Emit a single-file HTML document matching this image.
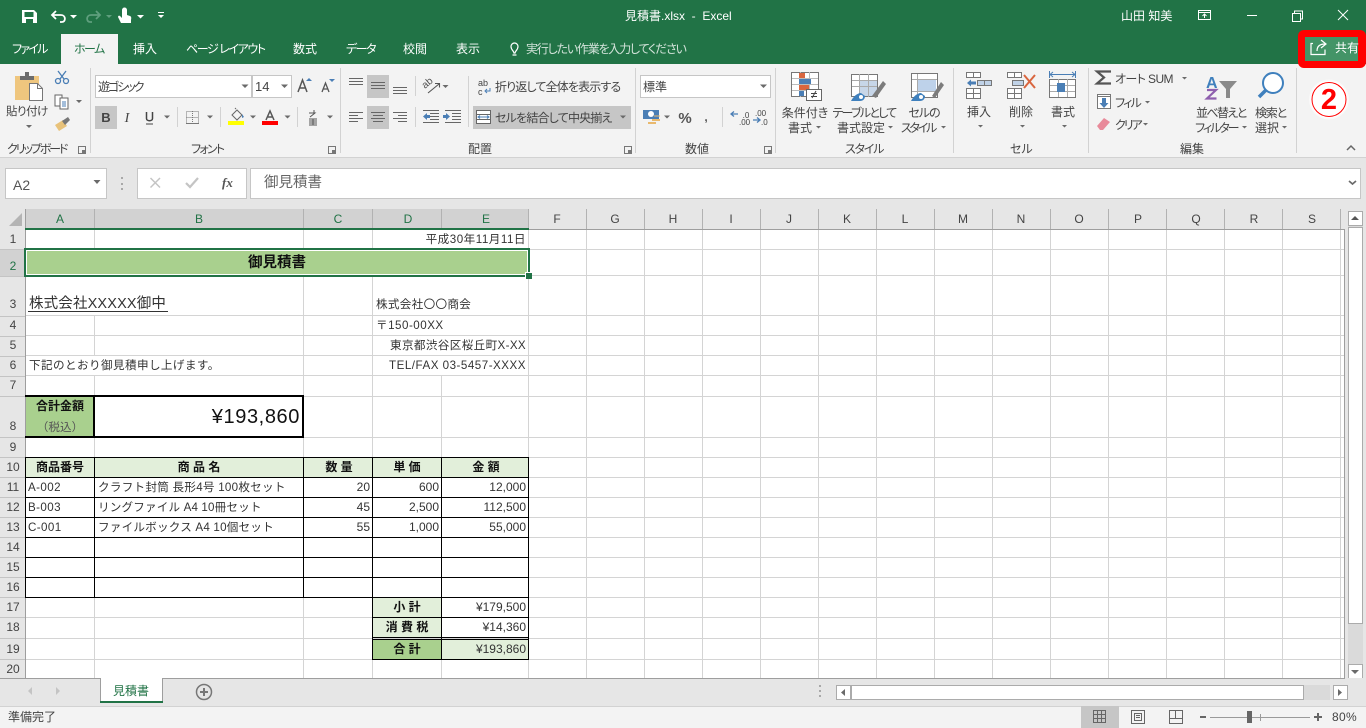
<!DOCTYPE html>
<html lang="ja"><head><meta charset="utf-8"><title>見積書.xlsx - Excel</title>
<style>
html,body{margin:0;padding:0;width:1366px;height:728px;overflow:hidden;background:#fff}
body{position:relative;font-family:"Liberation Sans","Noto Sans CJK JP",sans-serif;font-size:12px;color:#444}
.b{position:absolute}
.t{position:absolute;white-space:nowrap;line-height:16px;height:16px}
.c{transform:translateX(-50%)}
.w{color:#fff;font-feature-settings:"palt"}
.k{color:#222}
.h{color:#444;font-size:12px;font-feature-settings:"palt"}
.g{color:#217346}
.p{font-feature-settings:"palt"}
.x{font-size:11.6px;color:#333;margin-top:1px}
.n{font-size:12px;color:#333;text-align:right}
.bd{font-weight:700;color:#111;font-size:12px}
svg{position:absolute;left:0;top:0}
</style></head><body>
<div class="b" style="left:0;top:0;width:1366px;height:64px;background:#217346"></div>
<div class="b" style="left:0;top:64px;width:1366px;height:93px;background:#f3f3f3"></div>
<div class="b" style="left:0;top:157px;width:1366px;height:1px;background:#d2d2d2"></div>
<div class="b" style="left:0;top:158px;width:1366px;height:520px;background:#e6e6e6"></div>
<div class="b" style="left:61px;top:34px;width:57px;height:31px;background:#f3f3f3"></div>

<div class="b" style="left:1298px;top:30px;width:68px;height:38px;background:#f00;border-radius:6px"></div>
<div class="b" style="left:1305px;top:37px;width:53px;height:24px;background:#439467"></div>

<div class="b" style="left:95px;top:75px;width:155px;height:21px;background:#fff;border:1px solid #c6c6c6"></div>
<div class="b" style="left:252px;top:75px;width:38px;height:21px;background:#fff;border:1px solid #c6c6c6"></div>
<div class="b" style="left:640px;top:75px;width:129px;height:21px;background:#fff;border:1px solid #c6c6c6"></div>
<div class="b" style="left:95px;top:106px;width:22px;height:23px;background:#c6c6c6"></div>
<div class="b" style="left:367px;top:75px;width:22px;height:23px;background:#c6c6c6"></div>
<div class="b" style="left:367px;top:106px;width:22px;height:23px;background:#c6c6c6"></div>
<div class="b" style="left:473px;top:106px;width:158px;height:23px;background:#c6c6c6"></div>

<div class="b" style="left:5px;top:168px;width:100px;height:29px;background:#fff;border:1px solid #c6c6c6"></div>
<div class="b" style="left:137px;top:168px;width:108px;height:29px;background:#fff;border:1px solid #c6c6c6"></div>
<div class="b" style="left:250px;top:168px;width:1109px;height:29px;background:#fff;border:1px solid #c6c6c6"></div>

<div class="b" style="left:25px;top:230px;width:1319px;height:448px;background:#fff"></div>
<div class="b" style="left:25px;top:209px;width:504px;height:20px;background:#d2d2d2"></div>
<div class="b" style="left:0;top:249px;width:25px;height:27px;background:#d2d2d2"></div>

<div class="b" style="left:26px;top:250px;width:502px;height:25px;background:#a9d08e"></div>
<div class="b" style="left:26px;top:397px;width:68px;height:40px;background:#a9d08e"></div>
<div class="b" style="left:26px;top:458px;width:502px;height:19px;background:#e2efda"></div>
<div class="b" style="left:373px;top:598px;width:68px;height:39px;background:#e2efda"></div>
<div class="b" style="left:373px;top:640px;width:68px;height:19px;background:#a9d08e"></div>
<div class="b" style="left:442px;top:640px;width:86px;height:19px;background:#e2efda"></div>

<div class="b" style="left:1348px;top:211px;width:15px;height:467px;background:#dadada"></div>
<div class="b" style="left:1348px;top:227px;width:13px;height:395px;background:#fff;border:1px solid #ababab"></div>
<div class="b" style="left:1348px;top:211px;width:13px;height:13px;background:#fff;border:1px solid #ababab"></div>
<div class="b" style="left:1348px;top:664px;width:13px;height:13px;background:#fff;border:1px solid #ababab"></div>

<div class="b" style="left:0;top:678px;width:1366px;height:28px;background:#e6e6e6"></div>
<div class="b" style="left:0;top:678px;width:1345px;height:1px;background:#9e9e9e"></div>
<div class="b" style="left:100px;top:678px;width:61px;height:23px;background:#fff;border-left:1px solid #9e9e9e;border-right:1px solid #9e9e9e"></div>
<div class="b" style="left:100px;top:701px;width:63px;height:2px;background:#217346"></div>
<div class="b" style="left:851px;top:685px;width:479px;height:15px;background:#dadada"></div>
<div class="b" style="left:851px;top:685px;width:451px;height:13px;background:#fff;border:1px solid #ababab"></div>
<div class="b" style="left:836px;top:685px;width:13px;height:13px;background:#fff;border:1px solid #ababab"></div>
<div class="b" style="left:1333px;top:685px;width:13px;height:13px;background:#fff;border:1px solid #ababab"></div>
<div class="b" style="left:0;top:706px;width:1366px;height:22px;background:#f3f3f3;border-top:1px solid #d2d2d2;box-sizing:border-box"></div>
<div class="b" style="left:1081px;top:706px;width:38px;height:22px;background:#c6c6c6"></div>

<svg width="1366" height="728" viewBox="0 0 1366 728">
<!-- grid -->
<path fill="none" stroke="#d4d4d4" d="M25 249.500H1344M25 275.500H1344M25 315.500H1344M25 335.500H1344M25 355.500H1344M25 375.500H1344M25 396.500H1344M25 437.500H1344M25 457.500H1344M25 477.500H1344M25 497.500H1344M25 517.500H1344M25 537.500H1344M25 557.500H1344M25 577.500H1344M25 597.500H1344M25 617.500H1344M25 638.500H1344M25 659.500H1344"/>
<path fill="none" stroke="#d4d4d4" d="M94.500 230V249M94.500 316V356M94.500 376V396M94.500 437V678M303.500 230V249M303.500 276V678M372.500 230V249M372.500 276V678M441.500 376V678M528.500 230V678M586.500 230V678M644.500 230V678M702.500 230V678M760.500 230V678M818.500 230V678M876.500 230V678M934.500 230V678M992.500 230V678M1050.500 230V678M1108.500 230V678M1166.500 230V678M1224.500 230V678M1282.500 230V678M1340.500 230V678"/>
<path fill="none" stroke="#9e9e9e" d="M1344.500 229V679M25 229.500H1345M25.500 209V678"/>
<!-- row header separators -->
<path fill="none" stroke="#c4c4c4" d="M0 249.500H25M0 276.500H25M0 316.500H25M0 336.500H25M0 356.500H25M0 376.500H25M0 396.500H25M0 437.500H25M0 457.500H25M0 477.500H25M0 497.500H25M0 517.500H25M0 537.500H25M0 557.500H25M0 577.500H25M0 597.500H25M0 617.500H25M0 638.500H25M0 659.500H25"/>
<path fill="none" stroke="#b2b2b2" d="M94.500 209V229M303.500 209V229M372.500 209V229M441.500 209V229M528.500 209V229M586.500 209V229M644.500 209V229M702.500 209V229M760.500 209V229M818.500 209V229M876.500 209V229M934.500 209V229M992.500 209V229M1050.500 209V229M1108.500 209V229M1166.500 209V229M1224.500 209V229M1282.500 209V229M1340.500 209V229"/>
<path fill="#b4b4b4" d="M22 213V226H9z"/>
<!-- sheet borders -->
<path fill="none" stroke="#000" d="M25 457.500H529M25 477.500H529M25 497.500H529M25 517.500H529M25 537.500H529M25 557.500H529M25 577.500H529M25 597.500H529M25.500 457V598M94.500 457V598M303.500 457V598M372.500 457V660M441.500 457V660M528.500 457V660M372 617.500H529M372 637.500H529M372 639.500H529M372 659.500H529"/>
<path fill="none" stroke="#000" stroke-width="2" d="M25 396H303V437H25M94 396V437"/>
<path fill="none" stroke="#333" d="M28 311.500H168"/>
<!-- selection -->
<path fill="none" stroke="#fff" d="M26.500 250.500H527.500V274.500H26.500z"/>
<rect x="25" y="249" width="504" height="27" fill="none" stroke="#217346" stroke-width="2"/>
<rect x="25" y="228" width="504" height="2" fill="#217346"/>
<rect x="525" y="272" width="7" height="7" fill="#fff"/><rect x="526" y="273" width="6" height="6" fill="#217346"/>

<!-- QAT -->
<path fill="#fff" d="M22 10h12l3 3v10H22zM24.500 12v5h9v-5zM26 19v4h7v-4z"/><path fill="#217346" d="M29 20h2v2h-2z"/>
<path fill="none" stroke="#fff" stroke-width="1.800" d="M53 15h8c5 0 5 7 1 7h-2M56 11l-4 4 4 4"/>
<path fill="none" stroke="#5f9f7e" stroke-width="1.800" d="M99 15h-8c-5 0-5 7-1 7h2M96 11l4 4-4 4"/>
<path fill="#fff" d="M122 10a2.500 2.500 0 0 1 5 0v5l3 1c2 1 1 3 1 4v3h-10l-3-6c0-1 1-2 2-1l2 2z"/>
<path fill="#fff" d="M70 15h7l-3.500 3.500zM137 15h7l-3.500 3.500zM158 15h6l-3 3zM158 12h6v1h-6z"/><path fill="#5f9f7e" d="M106 15h6l-3 3z"/>
<!-- Title buttons -->
<path fill="none" stroke="#fff" d="M1198.500 10.500h12v9h-12zM1198 12.500h13M1204.500 18v-4M1202.500 16l2-2 2 2"/>
<path fill="none" stroke="#fff" d="M1247 15.500h10M1292.500 13.500h8v8h-8zM1294.500 13.500v-2.500h8v8h-2M1338 10l10 10M1348 10l-10 10"/>
<path fill="none" stroke="#fff" stroke-width="1.200" d="M514 53c0-2-3-3-3-6.500a3.500 3.500 0 0 1 7 0c0 3.500-3 4.500-3 6.500zM512.500 55h4"/>
<path fill="none" stroke="#fff" stroke-width="1.200" d="M1313 43.500h-2v11h14v-5M1317 51c0-4 2-7 8-7M1321 40l5 4-5 4"/>

<!-- small arrows -->
<path fill="#6a6a6a" d="M241.500 84.500h7l-3.500 3.500zM281 84.500h7l-3.500 3.500zM164 115.500h6l-3 3zM207 115.500h6l-3 3zM250 115.500h6l-3 3zM284.500 115.500h6l-3 3zM327 115.500h6l-3 3zM442.500 85h6l-3 3zM26 125h6l-3 3zM76 100h6l-3 3zM620 115.500h6l-3 3zM760 84.500h7l-3.500 3.500zM664 115.500h6l-3 3zM816 126h5l-2.500 2.500zM888 126h5l-2.500 2.500zM941 126h5l-2.500 2.500zM978 125h5l-2.500 2.500zM1020 125h5l-2.500 2.500zM1062 125h5l-2.500 2.500zM1182 77h5l-2.500 2.500zM1145 101h5l-2.500 2.500zM1143 123h5l-2.500 2.500zM1242 126h5l-2.500 2.500zM1282 126h5l-2.500 2.500zM93.500 180h7l-3.500 4z"/>
<!-- group separators -->
<path fill="none" stroke="#d2d2d2" d="M90.500 68V153M340.500 68V153M635.500 68V153M775.500 68V153M953.500 68V153M1088.500 68V153M1296.500 68V153M177.500 107V127M220.500 107V127M297.500 107V127M415.500 76V96M415.500 107V127M468.500 76V127M722.500 107V127"/>
<!-- launchers -->
<path fill="none" stroke="#777" d="M78.500 146.500h7v7h-7zM328.500 146.500h7v7h-7zM624.500 146.500h7v7h-7zM764.500 146.500h7v7h-7z"/>
<path fill="#777" d="M82 150h3v3h-3zM332 150h3v3h-3zM628 150h3v3h-3zM768 150h3v3h-3z"/>

<!-- paste -->
<path fill="#efc67e" d="M15 76h24v24H15z"/><path fill="#6b6b6b" d="M20 76h14v4H20zM25 72h4v4h-4z"/>
<path fill="#fff" stroke="#777" d="M29.500 83.500h8l5 5v12h-13z"/><path fill="none" stroke="#777" d="M37.500 83.500v5h5"/>
<path fill="none" stroke="#4a7eb5" stroke-width="1.300" d="M58 71l6 8M66 71l-6 8"/><circle cx="58" cy="81" r="2.500" fill="none" stroke="#4a7eb5" stroke-width="1.300"/><circle cx="66" cy="81" r="2.500" fill="none" stroke="#4a7eb5" stroke-width="1.300"/>
<path fill="#fff" stroke="#666" d="M55 95h7v11h-7z"/><path fill="#fff" stroke="#666" d="M60 98h8v11h-8z"/><path stroke="#4a7eb5" d="M62 102h4M62 104h4M62 106h4"/>
<path fill="#e8c27a" d="M55 125l8-5 4 6-8 5z"/><path fill="#777" d="M62 121l6-4 2 3-5 5z"/>
<!-- font grow -->
<path fill="none" stroke="#555" stroke-width="1.500" d="M298 92l4.500-12 4.500 12M300 88h5"/><path fill="#4a7eb5" d="M306 81l3-3 3 3z"/>
<path fill="none" stroke="#555" stroke-width="1.300" d="M322 92l3.500-9 3.500 9M323.500 89h4"/><path fill="#4a7eb5" d="M329 79l3 3 3-3z"/>
<text x="106" y="122" text-anchor="middle" font-family="Liberation Sans" font-weight="700" font-size="13" fill="#444">B</text>
<text x="127" y="122" text-anchor="middle" font-family="Liberation Serif" font-style="italic" font-size="14" fill="#444">I</text>
<path fill="none" stroke="#444" stroke-width="1.500" d="M146.500 112v6.500c0 3 6 3 6 0V112"/><path stroke="#444" d="M146 124h7"/>
<path fill="none" stroke="#777" stroke-dasharray="1 1" d="M186.500 111.500h12v12h-12zM186.500 117.500h12M192.500 111v13"/><path stroke="#777" d="M186 123.500h13"/>
<path fill="none" stroke="#666" d="M232 115l5-5 5 5-5 5zM236 109l-1-1"/><path fill="#4a7eb5" d="M242 114l2 3-2 1z"/><rect x="228" y="121" width="16" height="4" fill="#ff0"/>
<path fill="none" stroke="#555" stroke-width="1.500" d="M266 120l4-9 4 9M268 117h5"/><rect x="262" y="121" width="16" height="4" fill="#f00"/>
<path fill="none" stroke="#555" d="M309 113h6l-5 4M309 119h8M313 119v6M309 121h8M309 123h8M309 125h8"/><path stroke="#555" d="M314 110v3"/>
<!-- alignment -->
<path fill="none" stroke="#666" d="M349 78.500h14M349 81.500h14M349 84.500h14M371 82.500h14M371 85.500h14M371 88.500h14M393 87.500h14M393 90.500h14M393 93.500h14M349 112.500h14M349 115.500h9M349 118.500h14M349 121.500h9M371 112.500h14M373 115.500h10M371 118.500h14M373 121.500h10M393 112.500h14M398 115.500h9M393 118.500h14M398 121.500h9"/>
<text transform="translate(425 89) rotate(-40)" font-family="Liberation Sans" font-size="10" fill="#555">ab</text>
<path fill="none" stroke="#555" stroke-width="1.100" d="M428 93l11-9M435 83.500h4.500v4"/>
<path fill="none" stroke="#666" d="M423 110.500h16M430 113.500h9M430 116.500h9M430 119.500h9M423 122.500h16M445 110.500h16M452 113.500h9M452 116.500h9M452 119.500h9M445 122.500h16"/>
<path fill="#4a7eb5" d="M423 116.500l4-3.500v2h3v3h-3v2zM450 116.500l-4-3.500v2h-3v3h3v2z"/>
<!-- wrap -->
<text x="478" y="86" font-family="Liberation Sans" font-size="9" fill="#444">ab</text><text x="478" y="95" font-family="Liberation Sans" font-size="9" fill="#444">c</text>
<path fill="none" stroke="#4a7eb5" d="M490 88v3h-4M487 89l-2 2 2 2"/>
<path fill="#fff" stroke="#666" d="M476.500 110.500h14v13h-14z"/><path stroke="#666" d="M477 114.500h13M477 119.500h13"/><path fill="none" stroke="#4a7eb5" d="M479 117h9M480 115.500l-2 1.500 2 1.500M487 115.500l2 1.500-2 1.500"/>
<!-- number -->
<path fill="#4a7eb5" d="M643 110h16v9h-16z"/><circle cx="651" cy="114" r="3" fill="#fff"/><path fill="#e9b96e" d="M652 119h8v2h-8zM648 122h8v2h-8z"/><path fill="none" stroke="#e9b96e" d="M654 116h6"/>
<text x="685" y="123" text-anchor="middle" font-family="Liberation Sans" font-weight="700" font-size="15" fill="#555">%</text>
<text x="706" y="121" text-anchor="middle" font-family="Liberation Sans" font-weight="700" font-size="12" fill="#555">,</text>
<path fill="none" stroke="#4a7eb5" stroke-width="1.300" d="M731 114h7M734 111.500l-3 2.500 3 2.500M753 120h7M757 117.500l3 2.500-3 2.500"/>
<text x="746" y="118" text-anchor="middle" font-family="Liberation Sans" font-size="8" fill="#444">.0</text><text x="739" y="125" font-family="Liberation Sans" font-size="8" fill="#444">.00</text>
<text x="755" y="116" font-family="Liberation Sans" font-size="8" fill="#444">.00</text><text x="761" y="125" font-family="Liberation Sans" font-size="8" fill="#444">.0</text>
<!-- cond format -->
<path fill="#fff" stroke="#777" d="M791.500 72.500h27v24h-27z"/><path stroke="#bbb" fill="none" d="M800.500 72v25M809.500 72v25M792 78.500h26M792 84.500h26M792 90.500h26"/>
<path fill="#d9663f" d="M799 73h6v5h-6zM799 85h10v5h-10z"/><path fill="#4a7eb5" d="M799 79h12v5h-12zM799 91h5v5h-5z"/>
<path fill="#fff" stroke="#666" d="M806.500 89.500h15v11h-15z"/><path fill="none" stroke="#444" d="M811 93.500h6M811 96.500h6M816 91l-4 7"/>
<!-- table format -->
<path fill="#fff" stroke="#777" d="M851.500 74.500h26v22h-26z"/><path fill="#c7d6e8" d="M859 80h18v16h-18z"/><path fill="none" stroke="#aaa" d="M859.500 74v23M868.500 74v23M852 80.500h25M852 86.500h25"/>
<path fill="#7c7c7c" d="M872 96l11-15 3 3-10 14z"/><path fill="#3f80bd" d="M851 101c2-4 6-8 10-8l4 3c0 3-2 5-5 5z"/><path fill="#fff" d="M859 97a2 2 0 1 0 4 0a2 2 0 1 0-4 0"/>
<!-- cell style -->
<path fill="#fff" stroke="#777" d="M911.500 73.500h26v24h-26z"/><path fill="#bed2ea" d="M917 79h19v12h-19z"/><path fill="none" stroke="#aaa" d="M917.500 74v23M912 79.500h25M912 91.500h25"/>
<path fill="#7c7c7c" d="M932 96l9-14 3 3-9 13z"/><path fill="#3f80bd" d="M911 101c2-4 6-8 10-8l4 3c0 3-2 5-5 5z"/><path fill="#fff" d="M919 97a2 2 0 1 0 4 0a2 2 0 1 0-4 0"/>
<!-- insert -->
<path fill="#fff" stroke="#777" d="M966.500 72.500h14v5h-14zM973.500 72.500v5M966.500 88.500h14v10h-14zM973.500 88.500v10M966.500 93.500h14"/>
<path fill="#c0d2e7" stroke="#777" d="M977.500 80.500h14v5h-14zM984.500 80.500v5"/><path fill="#4a7eb5" d="M967 83l4-3.500v2h5v3h-5v2z"/>
<!-- delete -->
<path fill="#fff" stroke="#777" d="M1007.500 72.500h14v5h-14zM1014.500 72.500v5M1007.500 88.500h14v10h-14zM1014.500 88.500v10M1007.500 93.500h14"/>
<path fill="#c0d2e7" stroke="#777" d="M1012.500 80.500h11v5h-11z"/><path fill="none" stroke="#d9663f" stroke-width="2" d="M1024 75l11 13M1035 75l-11 13"/>
<!-- format -->
<path fill="#fff" stroke="#777" d="M1049.500 79.500h26v18h-26z"/><path fill="none" stroke="#aaa" d="M1058.500 79v18M1067.500 79v18M1050 85.500h25M1050 91.500h25"/><path fill="#4a7eb5" d="M1057 83h8v9h-8z"/>
<path fill="none" stroke="#4a7eb5" d="M1050 74.500h25M1053 72l-3 2.500 3 2.500M1072 72l3 2.500-3 2.500"/><path stroke="#4a7eb5" d="M1049.500 71v7M1075.500 71v7"/>
<!-- sum etc -->
<path fill="none" stroke="#555" stroke-width="2.200" d="M1111 71.500h-14l7 6-7 6h14"/>
<path fill="#fff" stroke="#777" d="M1097.500 94.500h13v14h-13z"/><path fill="#4a7eb5" d="M1102 98h4v5h2.500l-4.500 5-4.500-5h2.500z"/><path stroke="#777" d="M1098 96.500h12"/>
<path fill="#e88a9a" d="M1097 126l7-8 6 4-7 8h-3z"/>
<!-- sort -->
<text x="1206" y="88" font-family="Liberation Sans" font-weight="700" font-size="16" fill="#3f80bd">A</text>
<path fill="none" stroke="#8e5fae" stroke-width="2.200" d="M1207 90h9l-9 8.500h9.500"/>
<path fill="#8a8a8a" d="M1219 81h18l-7 8v9h-4v-9z"/>
<!-- find -->
<circle cx="1273" cy="83" r="10" fill="#fff" stroke="#3f80bd" stroke-width="2"/><path stroke="#3f80bd" stroke-width="3.500" d="M1266 90l-7 7"/>
<!-- formula -->
<path fill="none" stroke="#c4c4c4" stroke-width="1.500" d="M150.500 178l9.500 9.500M160 178l-9.500 9.500"/>
<path fill="none" stroke="#c4c4c4" stroke-width="2.200" d="M186 183l4 4 8-9"/>
<text x="222" y="187" font-family="Liberation Serif" font-style="italic" font-weight="700" font-size="13" fill="#555">fx</text>
<path fill="#a8a8a8" d="M121 177h2v2h-2zM121 183h2v2h-2zM121 188h2v2h-2z"/>
<path fill="#555" d="M1351 220l4-4 4 4z"/>
<path fill="#6a6a6a" d="M1351 670h8l-4 4z"/>
<path fill="none" stroke="#6a6a6a" stroke-width="1.700" d="M1349 181l3.500 3 3.500-3"/>
<!-- ribbon collapse -->
<path fill="none" stroke="#666" stroke-width="1.500" d="M1347 150l4-4 4 4"/>
<!-- sheet tab nav -->
<path fill="#c4c4c4" d="M32 687v8l-4-4zM56 687v8l4-4z"/>
<circle cx="204" cy="692" r="7.500" fill="none" stroke="#777" stroke-width="1.500"/><path stroke="#777" stroke-width="2" d="M200 692h8M204 688v8"/>
<path fill="#a8a8a8" d="M819 690h2v2h-2zM819 695h2v2h-2zM819 685h2v2h-2z"/>
<path fill="#6a6a6a" d="M845 689v7l-4-3.500zM1338 689v7l4-3.500z"/>
<!-- status -->
<path fill="none" stroke="#666" d="M1093.500 710.500h12v12h-12zM1097.500 710v13M1101.500 710v13M1093 714.500h13M1093 718.500h13"/>
<path fill="none" stroke="#666" d="M1131.500 710.500h13v13h-13zM1134.500 713.500h7v7h-7zM1136 715.500h4M1136 717.500h4"/>
<path fill="none" stroke="#666" d="M1169.500 710.500h13v13h-13zM1175.500 710v8.500h-6M1175.500 718.500h7"/>
<path fill="#666" d="M1200 716h6v2h-6zM1314 716h8v2h-8zM1317 713h2v8h-2z"/>
<path stroke="#9a9a9a" d="M1210 717.500h100M1260.500 714v7"/>
<rect x="1247" y="711" width="5" height="12" fill="#666"/>
<!-- circled 2 -->
<circle cx="1329" cy="99.500" r="20" fill="#fff" opacity=".55"/>
<circle cx="1329" cy="99.500" r="18.500" fill="#fff"/>
<circle cx="1329" cy="99.500" r="17" fill="#fff" stroke="#f00"/>
</svg>
<div class="t" style="left:1314px;top:85px;width:30px;text-align:center;font-size:29px;line-height:30px;height:30px;font-weight:700;color:#f00">2</div>

<!-- Title -->
<div class="t w" style="left:625px;top:8px;font-size:12px">見積書.xlsx&nbsp;&nbsp;-&nbsp;&nbsp;Excel</div>
<div class="t w" style="left:1121px;top:8px;font-size:12px">山田 知美</div>
<!-- Tabs -->
<div class="t w" style="left:12px;top:41px;letter-spacing:-1.7px">ファイル</div>
<div class="t g p" style="left:74px;top:41px;letter-spacing:-1.5px">ホーム</div>
<div class="t w" style="left:133px;top:41px">挿入</div>
<div class="t w" style="left:186px;top:41px;letter-spacing:-1.4px">ページ レイアウト</div>
<div class="t w" style="left:293px;top:41px">数式</div>
<div class="t w" style="left:346px;top:41px;letter-spacing:-1.5px">データ</div>
<div class="t w" style="left:403px;top:41px">校閲</div>
<div class="t w" style="left:456px;top:41px">表示</div>
<div class="t p" style="left:526px;top:41px;color:#d3e3da;letter-spacing:-1.2px">実行したい作業を入力してください</div>
<div class="t w" style="left:1335px;top:40px">共有</div>
<!-- Ribbon text -->
<div class="t h" style="left:6px;top:104px;font-size:11.500px;letter-spacing:-.5px">貼り付け</div>
<div class="t h" style="left:98px;top:79px;letter-spacing:-2px">遊ゴシック</div>
<div class="t h" style="left:255px;top:79px;font-size:13px">14</div>
<div class="t h" style="left:643px;top:79px">標準</div>
<div class="t h" style="left:495px;top:79px;letter-spacing:-.85px">折り返して全体を表示する</div>
<div class="t h" style="left:495px;top:110px;letter-spacing:-.8px">セルを結合して中央揃え</div>
<div class="t h c" style="left:805px;top:105px">条件付き</div>
<div class="t h c" style="left:800px;top:120px">書式</div>
<div class="t h c" style="left:864px;top:105px;letter-spacing:-1.7px">テーブルとして</div>
<div class="t h c" style="left:861px;top:120px">書式設定</div>
<div class="t h c" style="left:924px;top:105px;letter-spacing:-1px">セルの</div>
<div class="t h c" style="left:918px;top:120px;letter-spacing:-2.2px">スタイル</div>
<div class="t h" style="left:967px;top:104px">挿入</div>
<div class="t h" style="left:1009px;top:104px">削除</div>
<div class="t h" style="left:1051px;top:104px">書式</div>
<div class="t h" style="left:1115px;top:71px;letter-spacing:-.6px">オート SUM</div>
<div class="t h" style="left:1115px;top:95px;letter-spacing:-1.7px">フィル</div>
<div class="t h" style="left:1115px;top:117px;letter-spacing:-2px">クリア</div>
<div class="t h" style="left:1196px;top:105px;letter-spacing:-1.6px">並べ替えと</div>
<div class="t h" style="left:1195px;top:120px;letter-spacing:-2px">フィルター</div>
<div class="t h" style="left:1255px;top:105px;letter-spacing:-1.2px">検索と</div>
<div class="t h" style="left:1255px;top:120px">選択</div>
<div class="t h" style="left:7px;top:141px;letter-spacing:-2.1px">クリップボード</div>
<div class="t h" style="left:191px;top:141px;letter-spacing:-1.75px">フォント</div>
<div class="t h" style="left:468px;top:141px">配置</div>
<div class="t h" style="left:685px;top:141px">数値</div>
<div class="t h" style="left:845px;top:141px;letter-spacing:-1.2px">スタイル</div>
<div class="t h" style="left:1010px;top:141px">セル</div>
<div class="t h" style="left:1180px;top:141px">編集</div>
<!-- Formula -->
<div class="t" style="left:13px;top:177px;font-size:14px;color:#555">A2</div>
<div class="t" style="left:264px;top:175px;font-size:14.500px;color:#666">御見積書</div>
<!-- Column headers -->
<div class="t g c" style="left:60px;top:211px">A</div>
<div class="t g c" style="left:199px;top:211px">B</div>
<div class="t g c" style="left:338px;top:211px">C</div>
<div class="t g c" style="left:408px;top:211px">D</div>
<div class="t g c" style="left:486px;top:211px">E</div>
<div class="t c" style="left:557px;top:211px">F</div>
<div class="t c" style="left:615px;top:211px">G</div>
<div class="t c" style="left:673px;top:211px">H</div>
<div class="t c" style="left:731px;top:211px">I</div>
<div class="t c" style="left:789px;top:211px">J</div>
<div class="t c" style="left:847px;top:211px">K</div>
<div class="t c" style="left:905px;top:211px">L</div>
<div class="t c" style="left:963px;top:211px">M</div>
<div class="t c" style="left:1021px;top:211px">N</div>
<div class="t c" style="left:1079px;top:211px">O</div>
<div class="t c" style="left:1138px;top:211px">P</div>
<div class="t c" style="left:1196px;top:211px">Q</div>
<div class="t c" style="left:1254px;top:211px">R</div>
<div class="t c" style="left:1312px;top:211px">S</div>
<!-- Row headers -->
<div class="t c" style="left:13px;top:231px">1</div>
<div class="t g c" style="left:13px;top:258px">2</div>
<div class="t c" style="left:13px;top:296px">3</div>
<div class="t c" style="left:13px;top:317px">4</div>
<div class="t c" style="left:13px;top:337px">5</div>
<div class="t c" style="left:13px;top:357px">6</div>
<div class="t c" style="left:13px;top:377px">7</div>
<div class="t c" style="left:13px;top:418px">8</div>
<div class="t c" style="left:13px;top:439px">9</div>
<div class="t c" style="left:13px;top:459px">10</div>
<div class="t c" style="left:13px;top:479px">11</div>
<div class="t c" style="left:13px;top:499px">12</div>
<div class="t c" style="left:13px;top:519px">13</div>
<div class="t c" style="left:13px;top:539px">14</div>
<div class="t c" style="left:13px;top:559px">15</div>
<div class="t c" style="left:13px;top:579px">16</div>
<div class="t c" style="left:13px;top:599px">17</div>
<div class="t c" style="left:13px;top:619px">18</div>
<div class="t c" style="left:13px;top:641px">19</div>
<div class="t c" style="left:13px;top:661px">20</div>
<!-- Cells -->
<div class="t x" style="right:840px;top:231px;letter-spacing:.5px">平成30年11月11日</div>
<div class="t c" style="left:277px;top:255px;font-size:14.500px;font-weight:700;color:#111">御見積書</div>
<div class="t" style="left:29px;top:296px;font-size:14.500px;color:#333;letter-spacing:.15px">株式会社XXXXX御中</div>
<div class="t x" style="left:376px;top:296px;letter-spacing:.3px">株式会社〇〇商会</div>
<div class="t x" style="left:376px;top:317px;letter-spacing:.5px">〒150-00XX</div>
<div class="t x" style="right:840px;top:337px;letter-spacing:.35px">東京都渋谷区桜丘町X-XX</div>
<div class="t x" style="right:840px;top:357px;letter-spacing:.5px">TEL/FAX 03-5457-XXXX</div>
<div class="t x" style="left:29px;top:357px;letter-spacing:.4px">下記のとおり御見積申し上げます。</div>
<div class="t bd c" style="left:60px;top:398px">合計金額</div>
<div class="t x c" style="left:60px;top:419px;color:#555">（税込）</div>
<div class="t" style="right:1066px;top:407px;font-size:20px;line-height:20px;height:20px;color:#111;letter-spacing:.6px">¥193,860</div>
<div class="t bd c" style="left:60px;top:459px">商品番号</div>
<div class="t bd c" style="left:199px;top:459px">商 品 名</div>
<div class="t bd c" style="left:339px;top:459px">数 量</div>
<div class="t bd c" style="left:407px;top:459px">単 価</div>
<div class="t bd c" style="left:486px;top:459px">金 額</div>
<div class="t x" style="left:28px;top:479px;letter-spacing:.4px">A-002</div>
<div class="t x" style="left:98px;top:479px;letter-spacing:.25px">クラフト封筒 長形4号 100枚セット</div>
<div class="t n" style="right:996px;top:479px">20</div>
<div class="t n" style="right:927px;top:479px">600</div>
<div class="t n" style="right:840px;top:479px">12,000</div>
<div class="t x" style="left:28px;top:499px;letter-spacing:.4px">B-003</div>
<div class="t x" style="left:98px;top:499px;letter-spacing:.15px">リングファイル A4 10冊セット</div>
<div class="t n" style="right:996px;top:499px">45</div>
<div class="t n" style="right:927px;top:499px">2,500</div>
<div class="t n" style="right:840px;top:499px">112,500</div>
<div class="t x" style="left:28px;top:519px;letter-spacing:.4px">C-001</div>
<div class="t x" style="left:98px;top:519px;letter-spacing:.2px">ファイルボックス A4 10個セット</div>
<div class="t n" style="right:996px;top:519px">55</div>
<div class="t n" style="right:927px;top:519px">1,000</div>
<div class="t n" style="right:840px;top:519px">55,000</div>
<div class="t bd c" style="left:407px;top:599px">小 計</div>
<div class="t n" style="right:840px;top:599px">¥179,500</div>
<div class="t bd c" style="left:407px;top:619px">消 費 税</div>
<div class="t n" style="right:840px;top:619px">¥14,360</div>
<div class="t bd c" style="left:407px;top:641px">合 計</div>
<div class="t n" style="right:840px;top:641px">¥193,860</div>
<!-- bottom -->
<div class="t g c" style="left:131px;top:683px">見積書</div>
<div class="t" style="left:8px;top:709px">準備完了</div>
<div class="t" style="left:1332px;top:709px;letter-spacing:.3px">80%</div>
</body></html>
